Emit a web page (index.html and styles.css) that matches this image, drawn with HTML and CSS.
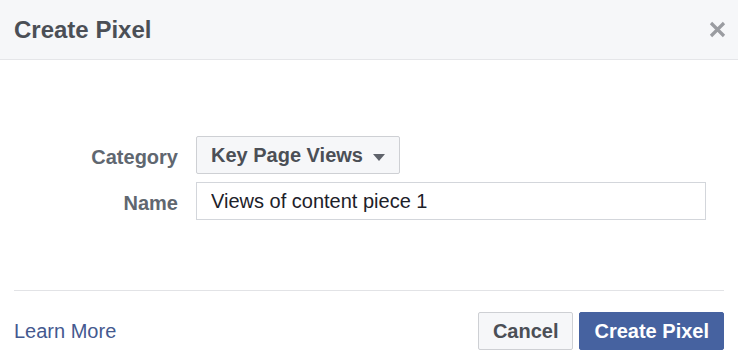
FILE: index.html
```html
<!DOCTYPE html>
<html lang="en">
<head>
    <meta charset="UTF-8">
    <title>Create Pixel</title>
    <link rel="stylesheet" href="styles.css">
</head>
<body>

<div class="dialog">
    <div class="header">
        <h1 class="title">Create Pixel</h1>
        <button class="close" aria-label="Close">
            <svg width="17" height="17" viewBox="0 0 17 17">
                <path d="M2 2 L15 15 M15 2 L2 15" stroke="#9a9ca1" stroke-width="3.2" stroke-linecap="butt"/>
            </svg>
        </button>
    </div>

    <div class="content">
        <div class="form">
            <label class="label">Category</label>
            <div class="field">
                <button class="select">Key Page Views <span class="caret"></span></button>
            </div>
            <label class="label" for="name">Name</label>
            <div class="field">
                <input id="name" class="input" type="text" value="Views of content piece 1">
            </div>
        </div>
    </div>

    <div class="footer">
        <a class="learn" href="#">Learn More</a>
        <div class="actions">
            <button class="btn">Cancel</button>
            <button class="btn primary">Create Pixel</button>
        </div>
    </div>
</div>

</body>
</html>
```

FILE: styles.css
```css
* {
    box-sizing: border-box;
}

body {
    margin: 0;
    width: 738px;
    height: 363px;
    background-color: #fff;
    font-family: "Liberation Sans", Arial, sans-serif;
}

.dialog {
    width: 738px;
    height: 363px;
    overflow: hidden;
}

.header {
    display: flex;
    justify-content: space-between;
    align-items: center;
    height: 60px;
    padding: 0 12px 0 14px;
    background-color: #f6f7f9;
    border-bottom: 1px solid #e5e6e9;
}

.title {
    margin: 0;
    font-size: 24px;
    font-weight: bold;
    color: #4b4f56;
}

.close {
    display: flex;
    padding: 0;
    margin-top: -1px;
    border: 0;
    background: none;
}

.content {
    padding: 76px 0 70px;
}

.form {
    display: grid;
    grid-template-columns: 178px 510px;
    column-gap: 18px;
    row-gap: 8px;
    align-items: center;
}

.label {
    text-align: right;
    font-size: 20px;
    font-weight: bold;
    color: #606770;
    padding-top: 4px;
}

.field {
    display: flex;
}

.select {
    display: flex;
    align-items: center;
    height: 38px;
    padding: 0 14px 0 14px;
    font-family: inherit;
    font-size: 20px;
    font-weight: bold;
    color: #4b4f56;
    background-color: #f6f7f9;
    border: 1px solid #ced0d4;
    border-radius: 2px;
}

.caret {
    width: 0;
    height: 0;
    margin-left: 10px;
    margin-top: 4px;
    border-left: 6px solid transparent;
    border-right: 6px solid transparent;
    border-top: 7px solid #5f636b;
}

.input {
    width: 510px;
    height: 38px;
    padding: 0 14px;
    font-family: inherit;
    font-size: 20px;
    color: #1d2129;
    border: 1px solid #d3d6db;
    border-radius: 0;
    outline: none;
}

.footer {
    display: flex;
    justify-content: space-between;
    align-items: center;
    margin: 0 14px 0 14px;
    padding: 21px 0;
    border-top: 1px solid #e2e3e6;
}

.learn {
    font-size: 20px;
    color: #44598f;
    text-decoration: none;
    margin-top: 1px;
}

.actions {
    display: flex;
    gap: 6px;
}

.btn {
    height: 38px;
    padding: 0 14px;
    font-family: inherit;
    font-size: 20px;
    font-weight: bold;
    color: #4b4f56;
    background-color: #f6f7f9;
    border: 1px solid #ced0d4;
    border-radius: 2px;
}

.primary {
    color: #fff;
    background-color: #4662a0;
    border-color: #4662a0;
}
```
